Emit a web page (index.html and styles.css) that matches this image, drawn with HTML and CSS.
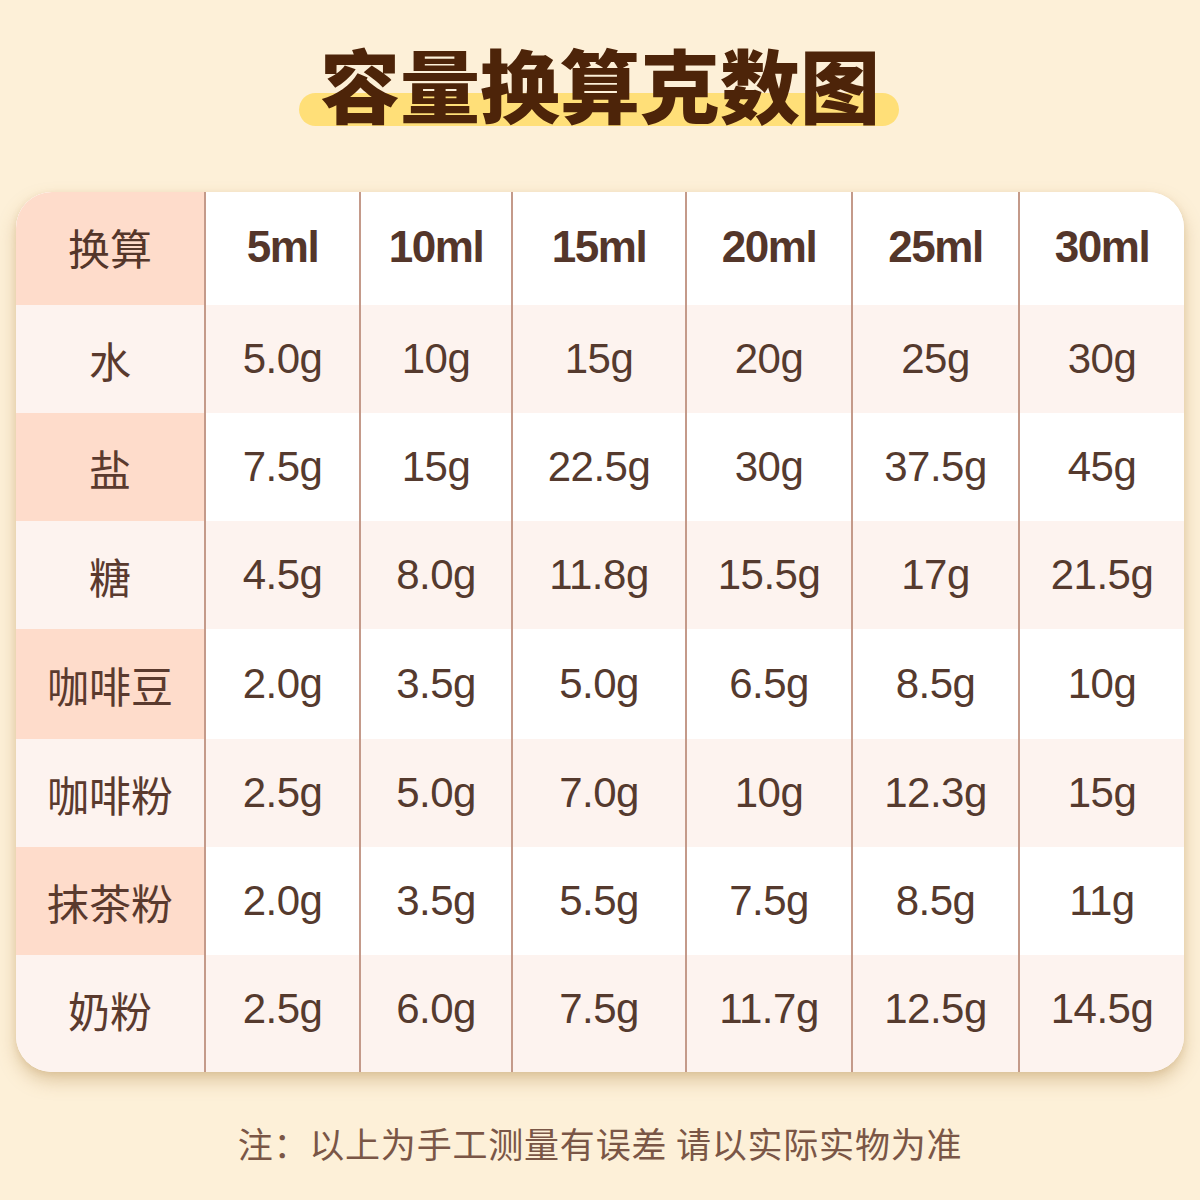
FILE: index.html
```html
<!DOCTYPE html>
<html lang="zh-CN">
<head>
<meta charset="utf-8">
<title>容量换算克数图</title>
<link rel="stylesheet" href="styles.css">
</head>
<body>
<div class="page">
  <div class="title-wrap">
    <h1 class="title">容量换算克数图</h1>
  </div>
  <div class="card">
    <div class="row head">
      <div class="cell lab">换算</div>
      <div class="cell">5ml</div>
      <div class="cell">10ml</div>
      <div class="cell">15ml</div>
      <div class="cell">20ml</div>
      <div class="cell">25ml</div>
      <div class="cell">30ml</div>
    </div>
    <div class="row light">
      <div class="cell lab">水</div>
      <div class="cell">5.0g</div>
      <div class="cell">10g</div>
      <div class="cell">15g</div>
      <div class="cell">20g</div>
      <div class="cell">25g</div>
      <div class="cell">30g</div>
    </div>
    <div class="row plain">
      <div class="cell lab">盐</div>
      <div class="cell">7.5g</div>
      <div class="cell">15g</div>
      <div class="cell">22.5g</div>
      <div class="cell">30g</div>
      <div class="cell">37.5g</div>
      <div class="cell">45g</div>
    </div>
    <div class="row light">
      <div class="cell lab">糖</div>
      <div class="cell">4.5g</div>
      <div class="cell">8.0g</div>
      <div class="cell">11.8g</div>
      <div class="cell">15.5g</div>
      <div class="cell">17g</div>
      <div class="cell">21.5g</div>
    </div>
    <div class="row plain tall">
      <div class="cell lab">咖啡豆</div>
      <div class="cell">2.0g</div>
      <div class="cell">3.5g</div>
      <div class="cell">5.0g</div>
      <div class="cell">6.5g</div>
      <div class="cell">8.5g</div>
      <div class="cell">10g</div>
    </div>
    <div class="row light">
      <div class="cell lab">咖啡粉</div>
      <div class="cell">2.5g</div>
      <div class="cell">5.0g</div>
      <div class="cell">7.0g</div>
      <div class="cell">10g</div>
      <div class="cell">12.3g</div>
      <div class="cell">15g</div>
    </div>
    <div class="row plain">
      <div class="cell lab">抹茶粉</div>
      <div class="cell">2.0g</div>
      <div class="cell">3.5g</div>
      <div class="cell">5.5g</div>
      <div class="cell">7.5g</div>
      <div class="cell">8.5g</div>
      <div class="cell">11g</div>
    </div>
    <div class="row light last">
      <div class="cell lab">奶粉</div>
      <div class="cell">2.5g</div>
      <div class="cell">6.0g</div>
      <div class="cell">7.5g</div>
      <div class="cell">11.7g</div>
      <div class="cell">12.5g</div>
      <div class="cell">14.5g</div>
    </div>
  </div>
  <p class="note">注：以上为手工测量有误差 请以实际实物为准</p>
</div>
</body>
</html>
```

FILE: styles.css
```css
html, body {
  margin: 0;
  padding: 0;
  background: #fdf0d8;
}

.page {
  width: 1200px;
  height: 1200px;
  box-sizing: border-box;
  padding: 42px 16px 0;
  display: flex;
  flex-direction: column;
  align-items: center;
}

.title-wrap {
  display: flex;
  justify-content: center;
  height: 80px;
  margin-bottom: 70px;
}

.title {
  position: relative;
  z-index: 0;
  margin: 0;
  font-family: "Noto Sans CJK SC", sans-serif;
  font-weight: 900;
  font-size: 80px;
  line-height: 80px;
  color: #4d2409;
  letter-spacing: 0;
}

.title::before {
  content: "";
  position: absolute;
  z-index: -1;
  left: -21px;
  right: -19px;
  top: 51px;
  height: 33px;
  border-radius: 17px;
  background: #ffdf78;
}

.card {
  width: 1168px;
  border-radius: 36px;
  overflow: hidden;
  background: #ffffff;
  box-shadow: 0 9px 18px rgba(170, 125, 60, 0.35), 0 2px 6px rgba(170, 125, 60, 0.15);
}

.row {
  display: grid;
  grid-template-columns: 188px 155px 152px 174px 166px 167px 166px;
  height: 108px;
}

.row.head {
  height: 113px;
  background: #ffffff;
}

.row.head .cell {
  padding-bottom: 4px;
}

.row.tall {
  height: 110px;
}

.row.last {
  height: 117px;
}

.row.last .cell {
  padding-bottom: 9px;
}

.cell {
  display: flex;
  align-items: center;
  justify-content: center;
  border-left: 2px solid #c49a8a;
  font-family: "Liberation Sans", Arial, sans-serif;
  font-size: 42px;
  letter-spacing: -0.5px;
  color: #553a2e;
}

.cell.lab {
  border-left: none;
  font-family: "Noto Sans CJK SC", sans-serif;
  font-size: 42px;
  letter-spacing: 0;
  color: #5a3a2e;
}

.row.head .cell {
  font-weight: 700;
  font-size: 44px;
  letter-spacing: -1.5px;
  color: #54362a;
}

.row.head .cell.lab {
  font-weight: 400;
  font-size: 42px;
  letter-spacing: 0;
  background: #fedccb;
}

.row.light {
  background: #fdf3ef;
}

.row.plain {
  background: #ffffff;
}

.row.plain .cell.lab {
  background: #fedccb;
}

.note {
  margin: 53px 0 0;
  font-family: "Noto Sans CJK SC", sans-serif;
  font-size: 35px;
  line-height: 36px;
  letter-spacing: 0.8px;
  color: #7a5646;
}
```
